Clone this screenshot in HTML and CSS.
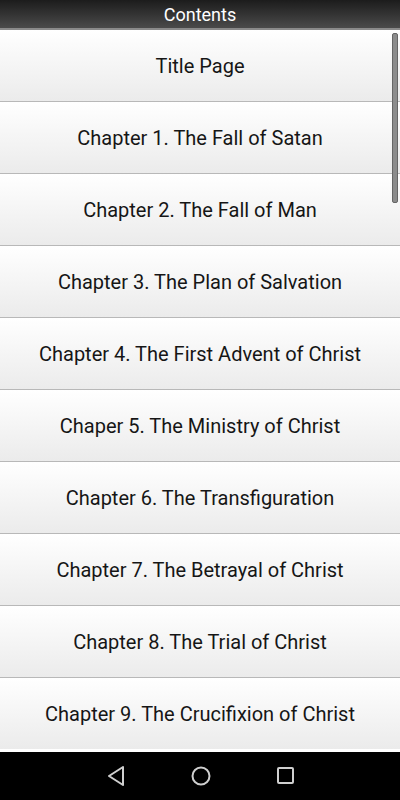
FILE: index.html
```html
<!DOCTYPE html>
<html>
<head>
<meta charset="utf-8">
<link rel="stylesheet" href="styles.css">
</head>
<body>
<div class="screen">
  <header class="header">Contents</header>
  <div class="list">
    <div class="row">Title Page</div>
    <div class="row">Chapter 1. The Fall of Satan</div>
    <div class="row">Chapter 2. The Fall of Man</div>
    <div class="row">Chapter 3. The Plan of Salvation</div>
    <div class="row">Chapter 4. The First Advent of Christ</div>
    <div class="row">Chaper 5. The Ministry of Christ</div>
    <div class="row">Chapter 6. The Transfiguration</div>
    <div class="row">Chapter 7. The Betrayal of Christ</div>
    <div class="row">Chapter 8. The Trial of Christ</div>
    <div class="row">Chapter 9. The Crucifixion of Christ</div>
    <div class="scrollbar"></div>
  </div>
  <nav class="navbar">
    <svg width="20" height="22" viewBox="0 0 20 22"><path d="M17 2 L3 11 L17 20 Z" fill="none" stroke="#cfcfcf" stroke-width="2" stroke-linejoin="round"/></svg>
    <svg width="22" height="22" viewBox="0 0 22 22"><circle cx="11" cy="11" r="8.5" fill="none" stroke="#cfcfcf" stroke-width="2"/></svg>
    <svg width="20" height="20" viewBox="0 0 20 20"><rect x="2" y="2" width="15" height="15" rx="1" fill="none" stroke="#cfcfcf" stroke-width="2"/></svg>
  </nav>
</div>
</body>
</html>
```
FILE: styles.css
```css
html, body {
  margin: 0;
  padding: 0;
}
body {
  font-family: Roboto, "Noto Sans", sans-serif;
  background: #fff;
}
.screen {
  width: 400px;
  height: 800px;
  display: flex;
  flex-direction: column;
  overflow: hidden;
}
.header {
  height: 27px;
  flex: 0 0 27px;
  background: linear-gradient(#1c1c1c, #4a4a4a);
  border-bottom: 2px solid #8a8a8a;
  color: #fff;
  font-size: 18px;
  display: flex;
  align-items: center;
  justify-content: center;
  padding-top: 1px;
  box-sizing: content-box;
}
.list {
  flex: 1;
  position: relative;
  overflow: hidden;
  background: #fff;
}
.row {
  height: 70px;
  padding-top: 1px;
  border-bottom: 1px solid #b8b8b8;
  background: linear-gradient(#ffffff, #ebebeb);
  display: flex;
  align-items: center;
  justify-content: center;
  font-size: 20px;
  color: #161616;
  box-sizing: content-box;
  height: 70px;
}
.row {
  height: 70px;
}
.scrollbar {
  position: absolute;
  right: 2px;
  top: 3px;
  width: 4px;
  height: 168px;
  border-radius: 2px;
  background: #8c8c8c;
  border: 0.5px solid #666;
}
.navbar {
  flex: 0 0 48px;
  height: 48px;
  background: #000;
  border-top: 3px solid #fff;
  display: flex;
  align-items: center;
  justify-content: center;
  gap: 64px;
  padding-left: 2px;
}
```
